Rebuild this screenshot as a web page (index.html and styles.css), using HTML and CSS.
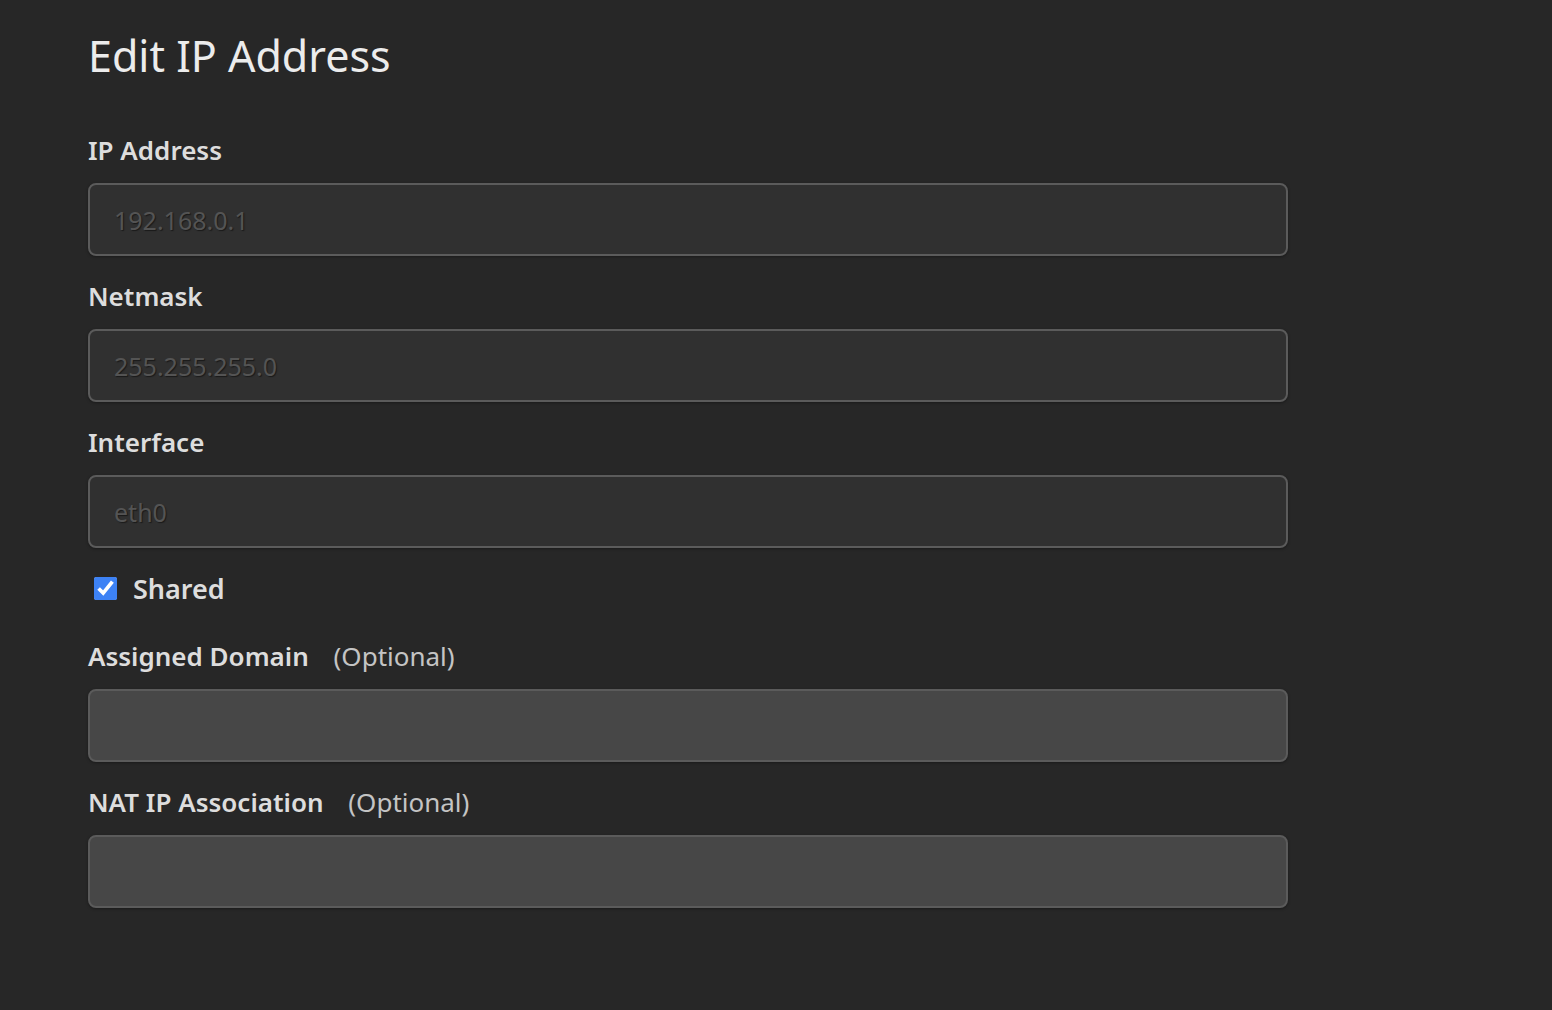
FILE: index.html
```html
<!DOCTYPE html>
<html lang="en">
<head>
  <meta charset="UTF-8" />
  <meta name="viewport" content="width=device-width, initial-scale=1.0"/>
  <title>Edit IP Address</title>
  <link rel="stylesheet" href="styles.css">
</head>
<body>

  <div class="page">
    <h1>Edit IP Address</h1>

    <form class="ip-form">
      <div class="field">
        <label for="ip">IP Address</label>
        <input id="ip" type="text" class="input" placeholder="192.168.0.1" disabled>
      </div>

      <div class="field">
        <label for="netmask">Netmask</label>
        <input id="netmask" type="text" class="input" placeholder="255.255.255.0" disabled>
      </div>

      <div class="field">
        <label for="iface">Interface</label>
        <input id="iface" type="text" class="input" placeholder="eth0" disabled>
      </div>

      <div class="check-row">
        <input id="shared" type="checkbox" checked>
        <label for="shared">Shared</label>
      </div>

      <div class="field">
        <label for="domain">Assigned Domain <span class="optional">(Optional)</span></label>
        <input id="domain" type="text" class="input editable">
      </div>

      <div class="field">
        <label for="nat">NAT IP Association <span class="optional">(Optional)</span></label>
        <input id="nat" type="text" class="input editable">
      </div>
    </form>
  </div>

</body>
</html>
```
FILE: styles.css
```css
* {
  box-sizing: border-box;
  margin: 0;
  padding: 0;
}

body {
  font-family: 'Noto Sans', 'Open Sans', sans-serif;
  background-color: #272727;
  color: #dcdcdc;
}

.page {
  padding: 28px 0 60px 88px;
  width: 1288px;
}

h1 {
  font-size: 43px;
  font-weight: 400;
  line-height: 56px;
  color: #ececec;
  margin-bottom: 49px;
}

.field {
  margin-bottom: 23px;
}

.field label {
  display: block;
  font-size: 26px;
  font-weight: 600;
  line-height: 34px;
  margin-bottom: 16px;
  color: #dddddd;
}

.optional {
  font-weight: 400;
  color: #c4c4c4;
  margin-left: 18px;
}

.input {
  display: block;
  width: 100%;
  height: 73px;
  padding: 0 24px;
  background-color: #303030;
  border: 2px solid #5b5b5b;
  border-radius: 8px;
  box-shadow: 0 1px 3px rgba(0,0,0,0.35);
  font-family: inherit;
  font-size: 25px;
  color: #555;
  outline: none;
}

.input::placeholder {
  color: #545454;
  text-shadow: 1px 1px 1px #1a1a1a;
}

.input.editable {
  background-color: #474747;
}

.check-row {
  display: flex;
  align-items: center;
  gap: 16px;
  height: 34px;
  margin-bottom: 34px;
  padding-left: 6px;
}

.check-row input {
  width: 23px;
  height: 23px;
  accent-color: #3d82f5;
}

.check-row label {
  font-size: 27px;
  font-weight: 600;
  color: #dddddd;
}
```
